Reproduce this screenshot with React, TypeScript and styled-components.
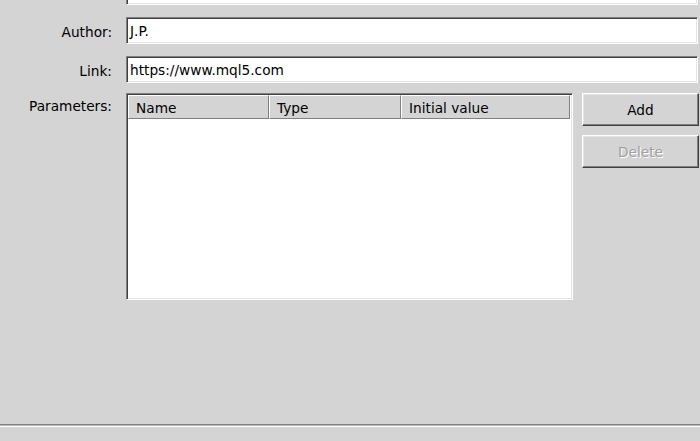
import React from "react";
import styled, { createGlobalStyle } from "styled-components";

const Global = createGlobalStyle`
  html, body { margin: 0; padding: 0; background: #d4d4d4; }
  body { font-family: "DejaVu Sans", "Liberation Sans", sans-serif; font-size: 13.7px; color: #000; }
  * { box-sizing: border-box; }
`;

const Window = styled.div`
  width: 700px;
  height: 441px;
  overflow: hidden;
  background: #d4d4d4;
  display: flex;
  flex-direction: column;
`;

const Form = styled.div`
  flex: 1;
  display: flex;
  flex-direction: column;
  padding-right: 2px;
`;

const Row = styled.div<{ $mt: number }>`
  display: grid;
  grid-template-columns: 112px 1fr;
  column-gap: 14px;
  margin-top: ${(p) => p.$mt}px;
`;

const Label = styled.div<{ $h: number }>`
  height: ${(p) => p.$h}px;
  display: flex;
  align-items: center;
  justify-content: flex-end;
  padding-top: 2px;
  color: #000;
  white-space: nowrap;
`;

const TextBox = styled.div`
  height: 27px;
  background: #fff;
  border: 1px solid;
  border-color: #808080 #ffffff #ffffff #808080;
  box-shadow: inset 1px 1px 0 #404040, inset -1px -1px 0 #e4e4e4;
  display: flex;
  align-items: center;
  padding: 1px 0 0 3px;
  white-space: nowrap;
  overflow: hidden;
`;

const ParamArea = styled.div`
  display: flex;
  gap: 9px;
  align-items: flex-start;
`;

const List = styled.div`
  width: 447px;
  height: 207px;
  background: #fff;
  border: 1px solid;
  border-color: #808080 #ffffff #ffffff #808080;
  box-shadow: inset 1px 1px 0 #404040, inset -1px -1px 0 #e4e4e4;
  padding: 1px;
  display: flex;
  flex-direction: column;
`;

const Header = styled.div`
  display: flex;
  height: 24px;
`;

const HeadCell = styled.div<{ $w: number }>`
  width: ${(p) => p.$w}px;
  height: 24px;
  background: #d4d4d4;
  border: 1px solid;
  border-color: #ffffff #808080 #808080 #ffffff;
  display: flex;
  align-items: center;
  padding: 1px 0 0 7px;
  white-space: nowrap;
`;

const Buttons = styled.div`
  width: 117px;
  display: flex;
  flex-direction: column;
  gap: 9px;
`;

const Button = styled.div<{ $disabled?: boolean }>`
  height: 33px;
  background: #d4d4d4;
  border: 1px solid;
  border-color: #ffffff #404040 #404040 #ffffff;
  box-shadow: inset -1px -1px 0 #808080, inset 1px 1px 0 #e4e4e4;
  display: flex;
  align-items: center;
  justify-content: center;
  padding-top: 1px;
  color: ${(p) => (p.$disabled ? "#a0a0a0" : "#000")};
  text-shadow: ${(p) => (p.$disabled ? "1px 1px 0 #ffffff" : "none")};
`;

const Separator = styled.div`
  height: 17px;
  border-top: 1px solid #808080;
  box-shadow: inset 0 1px 0 #b8b8b8, inset 0 2px 0 #ffffff;
  margin-top: auto;
`;

export default function App() {
  return (
    <Window>
      <Global />
      <Form>
        <Row $mt={-22}>
          <Label $h={27} />
          <TextBox />
        </Row>
        <Row $mt={12}>
          <Label $h={27}>Author:</Label>
          <TextBox>J.P.</TextBox>
        </Row>
        <Row $mt={12}>
          <Label $h={27}>Link:</Label>
          <TextBox>https://www.mql5.com</TextBox>
        </Row>
        <Row $mt={10}>
          <Label $h={23}>Parameters:</Label>
          <ParamArea>
            <List>
              <Header>
                <HeadCell $w={141}>Name</HeadCell>
                <HeadCell $w={132}>Type</HeadCell>
                <HeadCell $w={169}>Initial value</HeadCell>
              </Header>
            </List>
            <Buttons>
              <Button>Add</Button>
              <Button $disabled>Delete</Button>
            </Buttons>
          </ParamArea>
        </Row>
      </Form>
      <Separator />
    </Window>
  );
}
